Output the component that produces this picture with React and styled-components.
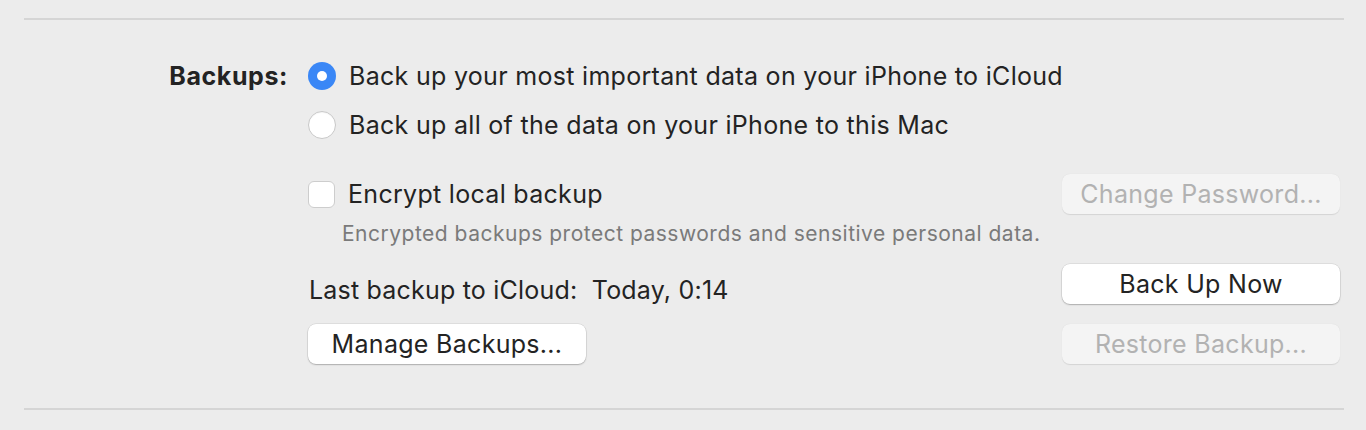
import React from 'react'
import styled, { createGlobalStyle } from 'styled-components'

const GlobalStyle = createGlobalStyle`
    html, body {
        margin: 0;
        padding: 0;
        background: #ececec;
    }
    body {
        font-family: Inter, "Liberation Sans", Arial, sans-serif;
        color: #232323;
    }
`

const Page = styled.div`
    width: 1366px;
    height: 430px;
    padding: 18px 22px 0 24px;
    box-sizing: border-box;
`

const Section = styled.div`
    border-top: 2px solid #d5d5d5;
    border-bottom: 2px solid #d5d5d5;
    height: 392px;
    box-sizing: border-box;
    display: grid;
    grid-template-columns: 264px 1fr;
    column-gap: 20px;
    padding: 41px 4px 0 0;
`

const Label = styled.div`
    font-weight: 650;
    font-size: 25px;
    letter-spacing: 0.6px;
    text-align: right;
    line-height: 30px;
`

const Content = styled.div`
    display: flex;
    flex-direction: column;
`

const Option = styled.label`
    display: flex;
    align-items: center;
    gap: 13px;
    height: 30px;
    font-size: 25px;
    letter-spacing: 0.3px;
    margin-bottom: ${(p) => p.gap || 0}px;
`

const Radio = styled.span`
    width: 28px;
    height: 28px;
    border-radius: 50%;
    box-sizing: border-box;
    flex: none;
    display: flex;
    align-items: center;
    justify-content: center;
    background: ${(p) => (p.checked ? '#3a87f6' : '#fff')};
    border: ${(p) => (p.checked ? 'none' : '1px solid #c8c8c8')};
    box-shadow: ${(p) => (p.checked ? 'none' : 'inset 0 1px 1px rgba(0,0,0,0.04)')};

    &::after {
        content: '';
        display: ${(p) => (p.checked ? 'block' : 'none')};
        width: 10px;
        height: 10px;
        border-radius: 50%;
        background: #fff;
    }
`

const Checkbox = styled.span`
    width: 27px;
    height: 27px;
    border-radius: 6px;
    box-sizing: border-box;
    flex: none;
    background: #fff;
    border: 1px solid #cdcdcd;
`

const Row = styled.div`
    display: flex;
    align-items: center;
    justify-content: space-between;
    margin-top: ${(p) => p.top || 0}px;
`

const Caption = styled.div`
    font-size: 21px;
    letter-spacing: 0.5px;
    color: #7a7a7a;
    margin: 7px 0 0 34px;
    line-height: 26px;
`

const Status = styled.div`
    font-size: 25px;
    letter-spacing: 0.2px;
    margin-top: 12px;
    padding-left: 1px;
`

const Button = styled.button`
    width: 278px;
    height: 40px;
    border: none;
    border-radius: 8px;
    font-family: Inter, "Liberation Sans", Arial, sans-serif;
    font-size: 25px;
    letter-spacing: 0.3px;
    padding: 0;
    background: ${(p) => (p.disabled ? '#f4f4f4' : '#fff')};
    color: ${(p) => (p.disabled ? '#b2b2b2' : '#232323')};
    box-shadow: ${(p) =>
        p.disabled
            ? '0 0.5px 1px rgba(0,0,0,0.1)'
            : '0 0 0 0.5px rgba(0,0,0,0.12), 0 1px 1.5px rgba(0,0,0,0.22)'};
`

export default function App() {
    return (
        <Page>
            <GlobalStyle />
            <Section>
                <Label>Backups:</Label>
                <Content>
                    <Option gap={19}>
                        <Radio checked />
                        Back up your most important data on your iPhone to iCloud
                    </Option>
                    <Option>
                        <Radio />
                        Back up all of the data on your iPhone to this Mac
                    </Option>
                    <Row top={34}>
                        <Option>
                            <Checkbox />
                            Encrypt local backup
                        </Option>
                        <Button disabled>Change Password...</Button>
                    </Row>
                    <Caption>Encrypted backups protect passwords and sensitive personal data.</Caption>
                    <Row top={16}>
                        <Status>Last backup to iCloud:&nbsp; Today, 0:14</Status>
                        <Button>Back Up Now</Button>
                    </Row>
                    <Row top={19}>
                        <Button>Manage Backups...</Button>
                        <Button disabled>Restore Backup...</Button>
                    </Row>
                </Content>
            </Section>
        </Page>
    )
}
